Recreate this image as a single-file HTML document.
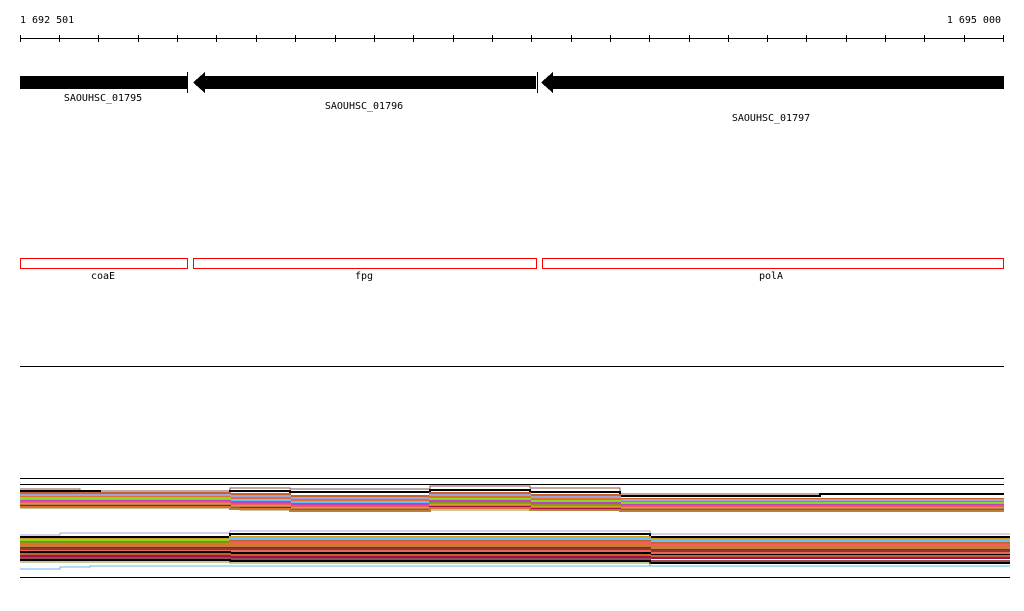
<!DOCTYPE html>
<html><head><style>html,body{margin:0;padding:0;background:#fff;width:1024px;height:611px;overflow:hidden}
svg text{font-family:"DejaVu Sans Mono","Liberation Mono",monospace;font-size:10px}</style></head>
<body>
<svg width="1024" height="611" xmlns="http://www.w3.org/2000/svg" shape-rendering="crispEdges">
<text x="20" y="23">1 692 501</text>
<text x="1001" y="23" text-anchor="end">1 695 000</text>
<line x1="20" y1="38.5" x2="1004" y2="38.5" stroke="#000"/>
<path stroke="#000" d="M20.5 35V42M59.5 35V42M98.5 35V42M138.5 35V42M177.5 35V42M216.5 35V42M256.5 35V42M295.5 35V42M335.5 35V42M374.5 35V42M413.5 35V42M453.5 35V42M492.5 35V42M531.5 35V42M571.5 35V42M610.5 35V42M649.5 35V42M689.5 35V42M728.5 35V42M767.5 35V42M806.5 35V42M846.5 35V42M885.5 35V42M924.5 35V42M964.5 35V42M1003.5 35V42"/>
<rect x="20" y="76" width="167" height="13" fill="#000"/>
<line x1="187.5" y1="72" x2="187.5" y2="93" stroke="#000"/>
<polygon points="193,82.5 205,72 205,76 536,76 536,89 205,89 205,93" fill="#000"/>
<line x1="537.5" y1="72" x2="537.5" y2="93" stroke="#000"/>
<polygon points="541,82.5 553,72 553,76 1004,76 1004,89 553,89 553,93" fill="#000"/>
<text x="103" y="101" text-anchor="middle">SAOUHSC_01795</text>
<text x="364" y="109" text-anchor="middle">SAOUHSC_01796</text>
<text x="771" y="121" text-anchor="middle">SAOUHSC_01797</text>
<g fill="none" stroke="#f00">
<rect x="20.5" y="258.5" width="167" height="10"/>
<rect x="193.5" y="258.5" width="343" height="10"/>
<rect x="542.5" y="258.5" width="461" height="10"/>
</g>
<text x="103" y="279" text-anchor="middle">coaE</text>
<text x="364" y="279" text-anchor="middle">fpg</text>
<text x="771" y="279" text-anchor="middle">polA</text>
<line x1="20" y1="366.5" x2="1004" y2="366.5" stroke="#000"/>
<line x1="20" y1="478.5" x2="1004" y2="478.5" stroke="#000"/>
<line x1="20" y1="484.5" x2="1004" y2="484.5" stroke="#000"/>
<line x1="20" y1="577.5" x2="1010" y2="577.5" stroke="#000"/>
<g fill="none" stroke-width="2">
<path stroke="#8a5050" d="M20 489H80V491H230V488H290V489H430V486H530V488H620V494H1004" stroke-width="1"/>
<path stroke="#000" d="M20 491H100V493H230V491H290V492H430V490H530V492H620V496H820V494H1004"/>
<path stroke="#c8602a" d="M20 493H230V494H290V496H430V493H530V495H620V499H1004"/>
<path stroke="#a0a0e0" d="M20 495H230V496H290V498H430V495H530V497H620V500H1004"/>
<path stroke="#e07030" d="M20 497H230V498H290V500H430V497H530V499H620V502H1004"/>
<path stroke="#80e020" d="M20 498H230V500H290V502H430V499H530V501H620V503H1004"/>
<path stroke="#60c0ff" d="M20 500H230V501H290V503H430V500H530V502H620V504H1004"/>
<path stroke="#c040c0" d="M20 501H230V502H290V504H430V501H530V503H620V505H1004"/>
<path stroke="#909020" d="M20 502H230V504H290V506H430V503H530V505H620V506H1004"/>
<path stroke="#f06060" d="M20 503H230V505H290V507H430V504H530V506H620V507H1004"/>
<path stroke="#d0a020" d="M20 504H230V506H290V508H430V505H530V507H620V508H1004"/>
<path stroke="#c08040" d="M20 505H230V507H290V509H430V506H530V508H620V509H1004"/>
<path stroke="#a01050" d="M20 506H230V508H290V510H430V507H530V509H620V510H1004"/>
<path stroke="#e07030" d="M20 507H230V509H290V511H430V508H530V510H620V511H1004"/>
<path stroke="#909040" d="M20 508H240V510H1004" stroke-width="1"/>

<path stroke="#b0a0d0" d="M20 535H60V533H230V531H650V534H1010" stroke-width="1"/>
<path stroke="#000" d="M20 537H230V534H650V537H1010"/>
<path stroke="#d0a020" d="M20 539H230V537H650V539H1010"/>
<path stroke="#60c0ff" d="M20 540H230V538H650V540H1010"/>
<path stroke="#80e020" d="M20 541H230V540H650V542H1010"/>
<path stroke="#c8602a" d="M20 542H230V541H650V543H1010"/>
<path stroke="#909020" d="M20 543H230V542H650V544H1010"/>
<path stroke="#f06060" d="M20 544H230V543H650V545H1010"/>
<path stroke="#e07030" d="M20 545H230V544H650V546H1010"/>
<path stroke="#c08040" d="M20 546H230V546H650V548H1010"/>
<path stroke="#a01050" d="M20 548H230V548H650V550H1010"/>
<path stroke="#8a3a2a" d="M20 549H230V549H650V551H1010"/>
<path stroke="#f06060" d="M20 551H230V551H650V553H1010"/>
<path stroke="#000" d="M20 552H230V553H650V555H1010"/>
<path stroke="#c8602a" d="M20 554H230V555H650V556H1010"/>
<path stroke="#a01050" d="M20 556H230V557H650V558H1010"/>
<path stroke="#8a5050" d="M20 558H230V559H650V561H1010"/>
<path stroke="#000" d="M20 560H230V561H650V563H1010"/>
<path stroke="#909040" d="M20 562H230V563H650V566H1010" stroke-width="1"/>
<path stroke="#60b8e8" d="M20 569H60V567H90V566H1010" stroke-width="1"/>
</g>
</svg>
</body></html>
